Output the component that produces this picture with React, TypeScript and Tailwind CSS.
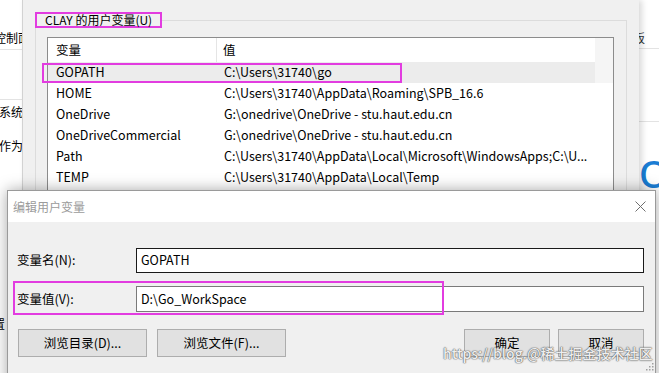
const rows = [
  ["GOPATH", "C:\\Users\\31740\\go"],
  ["HOME", "C:\\Users\\31740\\AppData\\Roaming\\SPB_16.6"],
  ["OneDrive", "G:\\onedrive\\OneDrive - stu.haut.edu.cn"],
  ["OneDriveCommercial", "G:\\onedrive\\OneDrive - stu.haut.edu.cn"],
  ["Path", "C:\\Users\\31740\\AppData\\Local\\Microsoft\\WindowsApps;C:\\U..."],
  ["TEMP", "C:\\Users\\31740\\AppData\\Local\\Temp"],
];

function WinButton({ label, wide }: { label: string; wide?: boolean }) {
  return (
    <button
      className={`h-[28px] ${wide ? "w-[129px]" : "w-[86px]"} bg-[#e1e1e1] border border-[#adadad] text-[12.5px] text-black`}
    >
      {label}
    </button>
  );
}

export default function App() {
  return (
    <div className="relative w-[659px] h-[373px] overflow-hidden bg-white text-[12.5px] text-black font-['Noto_Sans_CJK_SC',sans-serif]">
      {/* control panel window behind, left edge */}
      <div className="absolute left-0 top-0 w-[22px] h-full bg-white flex flex-col text-[12px] whitespace-nowrap">
        <div className="h-[30px] shrink-0" />
        <div className="h-[20px] shrink-0 border-b border-[#e3e3e3] -ml-[6px] leading-[16px]">控制面</div>
        <div className="h-[50px] shrink-0 border-b border-[#e3e3e3]" />
        <div className="h-[26px] shrink-0 -ml-[1px] pt-[4px] leading-[16px]">系统</div>
        <div className="h-[12px] shrink-0" />
        <div className="h-[26px] shrink-0 -ml-[1px] leading-[16px]">作为</div>
        <div className="h-[152px] shrink-0" />
        <div className="-ml-[7px] leading-[16px]">置</div>
      </div>

      {/* right window behind */}
      <div className="absolute left-[639px] top-0 w-[20px] h-full bg-white flex flex-col text-[12px] whitespace-nowrap">
        <div className="h-[30px] shrink-0" />
        <div className="h-[19px] shrink-0 border-b border-[#e3e3e3] -ml-[6px] leading-[16px] text-[#333]">板</div>
        <div className="h-[73px] shrink-0 border-b border-[#e3e3e3]" />
        <div className="h-[32px] shrink-0" />
        <div className="text-[38px] leading-[38px] font-medium text-[#1a7dd4] font-['Noto_Sans',sans-serif]">O</div>
      </div>

      {/* environment variables window */}
      <div className="absolute left-[22px] top-0 w-[617px] h-full bg-[#f0f0f0] border-l border-[#d2d2d2] shadow-[3px_0_6px_rgba(0,0,0,0.15)] pl-[12px] pr-[12px] pt-[12px]">
        <fieldset className="border border-[#dcdcdc] h-[420px]">
          <legend className="-ml-[1px] px-[8px] border-2 border-[#e23ce0] leading-[12px] text-[12px]">
            CLAY 的用户变量(U)
          </legend>
          <div className="mt-[9px] ml-[11px] w-[567px] h-[180px] border border-[#8c8c8c] bg-white">
            <div className="flex h-[24px]">
              <div className="w-[547px] flex items-center">
                <div className="w-[169px] shrink-0 h-full flex items-center pl-[8px] border-r border-[#e5e5e5]">变量</div>
                <div className="pl-[6px]">值</div>
              </div>
              <div className="flex-1 bg-[#f5f5f5]" />
            </div>
            {rows.map(([name, value], i) => (
              <div key={name} className="flex h-[21px]">
                <div className={`w-[547px] flex items-center whitespace-nowrap overflow-hidden ${i === 0 ? "bg-[#ececec]" : ""}`}>
                  <div className="w-[169px] shrink-0 pl-[8px]">{name}</div>
                  <div className="pl-[7px]">{value}</div>
                </div>
                <div className={`flex-1 ${i === 0 ? "bg-[#f5f5f5]" : ""}`} />
              </div>
            ))}
          </div>
        </fieldset>
      </div>

      {/* annotation around GOPATH row */}
      <div className="absolute left-[42px] top-[63px] w-[360px] h-[20px] border-2 border-[#e23ce0]" />

      {/* edit dialog */}
      <div className="absolute left-[7px] top-[190px] w-[649px] h-[200px] bg-[#f0f0f0] border border-[#9a9a9a] shadow-[0_0_14px_rgba(0,0,0,0.35)]">
        <div className="h-[31px] bg-white flex items-center justify-between pl-[5px] pr-[9px]">
          <span className="text-[12px] text-[#9b9b9b]">编辑用户变量</span>
          <svg width="11" height="11" viewBox="0 0 11 11">
            <path d="M0.5 0.5L10.5 10.5M10.5 0.5L0.5 10.5" stroke="#6e6e6e" strokeWidth="1" />
          </svg>
        </div>
        <div className="pl-[9px] pr-[11px] pt-[26px]">
          <div className="flex items-center">
            <div className="w-[119px]">变量名(N):</div>
            <div className="flex-1 h-[25px] bg-white border border-[#1a1a1a] flex items-center pl-[4px]">GOPATH</div>
          </div>
          <div className="flex items-center mt-[13px]">
            <div className="w-[119px]">变量值(V):</div>
            <div className="flex-1 h-[26px] bg-white border border-[#7a7a7a] flex items-center pl-[4px]">D:\Go_WorkSpace</div>
          </div>
          <div className="flex mt-[17px] pl-[1px]">
            <div className="flex gap-[10px]">
              <WinButton label="浏览目录(D)..." wide />
              <WinButton label="浏览文件(F)..." wide />
            </div>
            <div className="flex gap-[8px] ml-auto">
              <WinButton label="确定" />
              <WinButton label="取消" />
            </div>
          </div>
        </div>
      </div>

      {/* annotation around value row */}
      <div className="absolute left-[13px] top-[281px] w-[431px] h-[34px] border-2 border-[#e23ce0]" />

      {/* size grip */}
      <svg className="absolute left-[645px] top-[362px]" width="9" height="9" viewBox="0 0 9 9">
        <rect x="7" y="1" width="1.5" height="1.5" fill="#a0a0a0" />
        <rect x="4" y="4" width="1.5" height="1.5" fill="#a0a0a0" />
        <rect x="7" y="4" width="1.5" height="1.5" fill="#a0a0a0" />
        <rect x="1" y="7" width="1.5" height="1.5" fill="#a0a0a0" />
        <rect x="4" y="7" width="1.5" height="1.5" fill="#a0a0a0" />
        <rect x="7" y="7" width="1.5" height="1.5" fill="#a0a0a0" />
      </svg>

      {/* watermark */}
      <div className="absolute left-[443px] top-[344px] text-[14px] leading-[18px] font-medium whitespace-nowrap text-white/90 [text-shadow:0_0_1px_#555,0_0_1px_#555,0_0_2px_rgba(0,0,0,0.3)]">
        https://blog.@稀土掘金技术社区
      </div>
    </div>
  );
}
